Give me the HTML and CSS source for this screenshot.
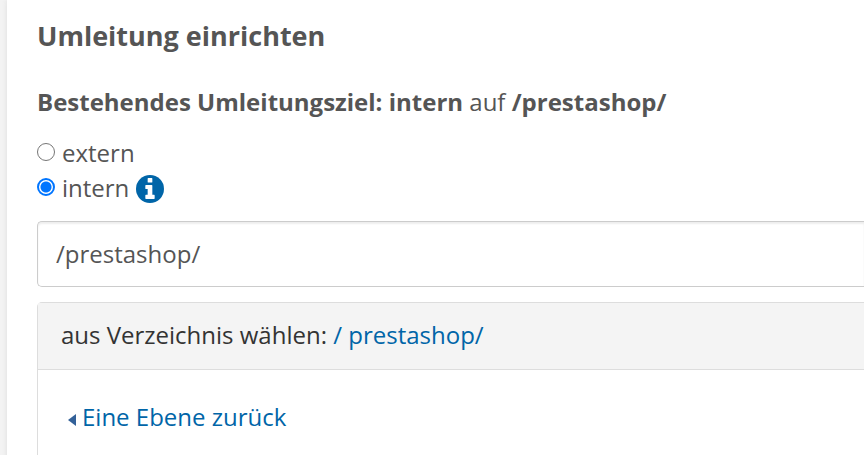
FILE: index.html
```html
<!DOCTYPE html>
<html lang="de">
<head>
  <meta charset="UTF-8">
  <meta name="viewport" content="width=device-width, initial-scale=1.0">
  <title>Umleitung einrichten</title>
  <link rel="stylesheet" href="styles.css">
</head>
<body>
  <main class="content">
    <h1>Umleitung einrichten</h1>
    <p class="current-target"><strong>Bestehendes Umleitungsziel: intern</strong> auf <strong>/prestashop/</strong></p>

    <form>
      <div class="option">
        <input type="radio" name="target" id="extern">
        <label for="extern">extern</label>
      </div>
      <div class="option">
        <input type="radio" name="target" id="intern" checked>
        <label for="intern">intern</label>
        <svg class="info-icon" viewBox="0 0 24 24" aria-hidden="true">
          <circle cx="12" cy="12" r="12" fill="#0065a8"/>
          <path fill="#fff" d="M10.5 2.5h3a.5.5 0 0 1 .5.5v3a.5.5 0 0 1-.5.5h-3a.5.5 0 0 1-.5-.5V3a.5.5 0 0 1 .5-.5zM8.500 8.500h5a.5.5 0 0 1 .5.5v8h1.500a.5.5 0 0 1 .5.5v2.500a.5.5 0 0 1-.5.5h-7a.5.5 0 0 1-.5-.5v-2.500a.5.5 0 0 1 .5-.5H10v-5H8.500a.5.5 0 0 1-.5-.5V9a.5.5 0 0 1 .5-.5z"/>
        </svg>
      </div>
      <input type="text" class="path-input" value="/prestashop/" aria-label="Pfad">
    </form>

    <section class="panel">
      <div class="panel-heading">aus Verzeichnis wählen: <a href="#">/</a> <a href="#">prestashop/</a></div>
      <div class="panel-body">
        <a class="back-link" href="#">
          <svg class="arrow" viewBox="0 0 8 12" aria-hidden="true"><path fill="#336199" d="M8 0v12L0 6z"/></svg>
          Eine Ebene zurück
        </a>
      </div>
    </section>
  </main>
</body>
</html>
```

FILE: styles.css
```css
* {
  box-sizing: border-box;
}
body {
  margin: 0;
  padding-left: 7px;
  background-color: #f3f3f3;
  font-family: 'Open Sans', sans-serif;
  font-size: 24px;
  line-height: 34px;
  color: #555;
  overflow: hidden;
}
.content {
  min-height: 100vh;
  padding: 19px 0 0 30px;
  background-color: #fff;
  box-shadow: 0 0 5px #ddd;
}
h1 {
  margin: 0;
  font-size: 27px;
  line-height: 34px;
}
.current-target {
  margin: 32px 0 16px;
}
.option {
  display: flex;
  align-items: center;
  height: 35px;
}
.option input {
  appearance: none;
  width: 18px;
  height: 18px;
  margin: 0 7px 2px 0;
  border: 1px solid #767676;
  border-radius: 50%;
}
.option input:checked {
  border: 2px solid #0075ff;
  background: radial-gradient(circle, #0075ff 5px, #fff 6px);
}
.info-icon {
  width: 28px;
  height: 28px;
  margin: 2px 0 0 7px;
}
.path-input {
  display: block;
  width: 100%;
  height: 66px;
  margin-top: 16px;
  padding: 0 18px 2px;
  border: 1px solid #ccc;
  border-right: 0;
  border-radius: 5px 0 0 5px;
  box-shadow: inset 0 2px 2px #eee;
  font: inherit;
  color: #555;
}
.panel {
  margin-top: 15px;
  border: 1px solid #ddd;
  border-right: 0;
  border-radius: 5px 0 0 0;
  color: #333;
}
.panel-heading {
  padding: 15px 23px 17px;
  border-bottom: 1px solid #ddd;
  background-color: #f4f4f4;
}
.panel a {
  color: #0065a8;
  text-decoration: none;
}
.panel-body {
  padding: 30px;
}
.back-link {
  display: flex;
  align-items: center;
  gap: 6px;
}
.arrow {
  width: 8px;
  height: 12px;
  margin-top: 5px;
}
```
